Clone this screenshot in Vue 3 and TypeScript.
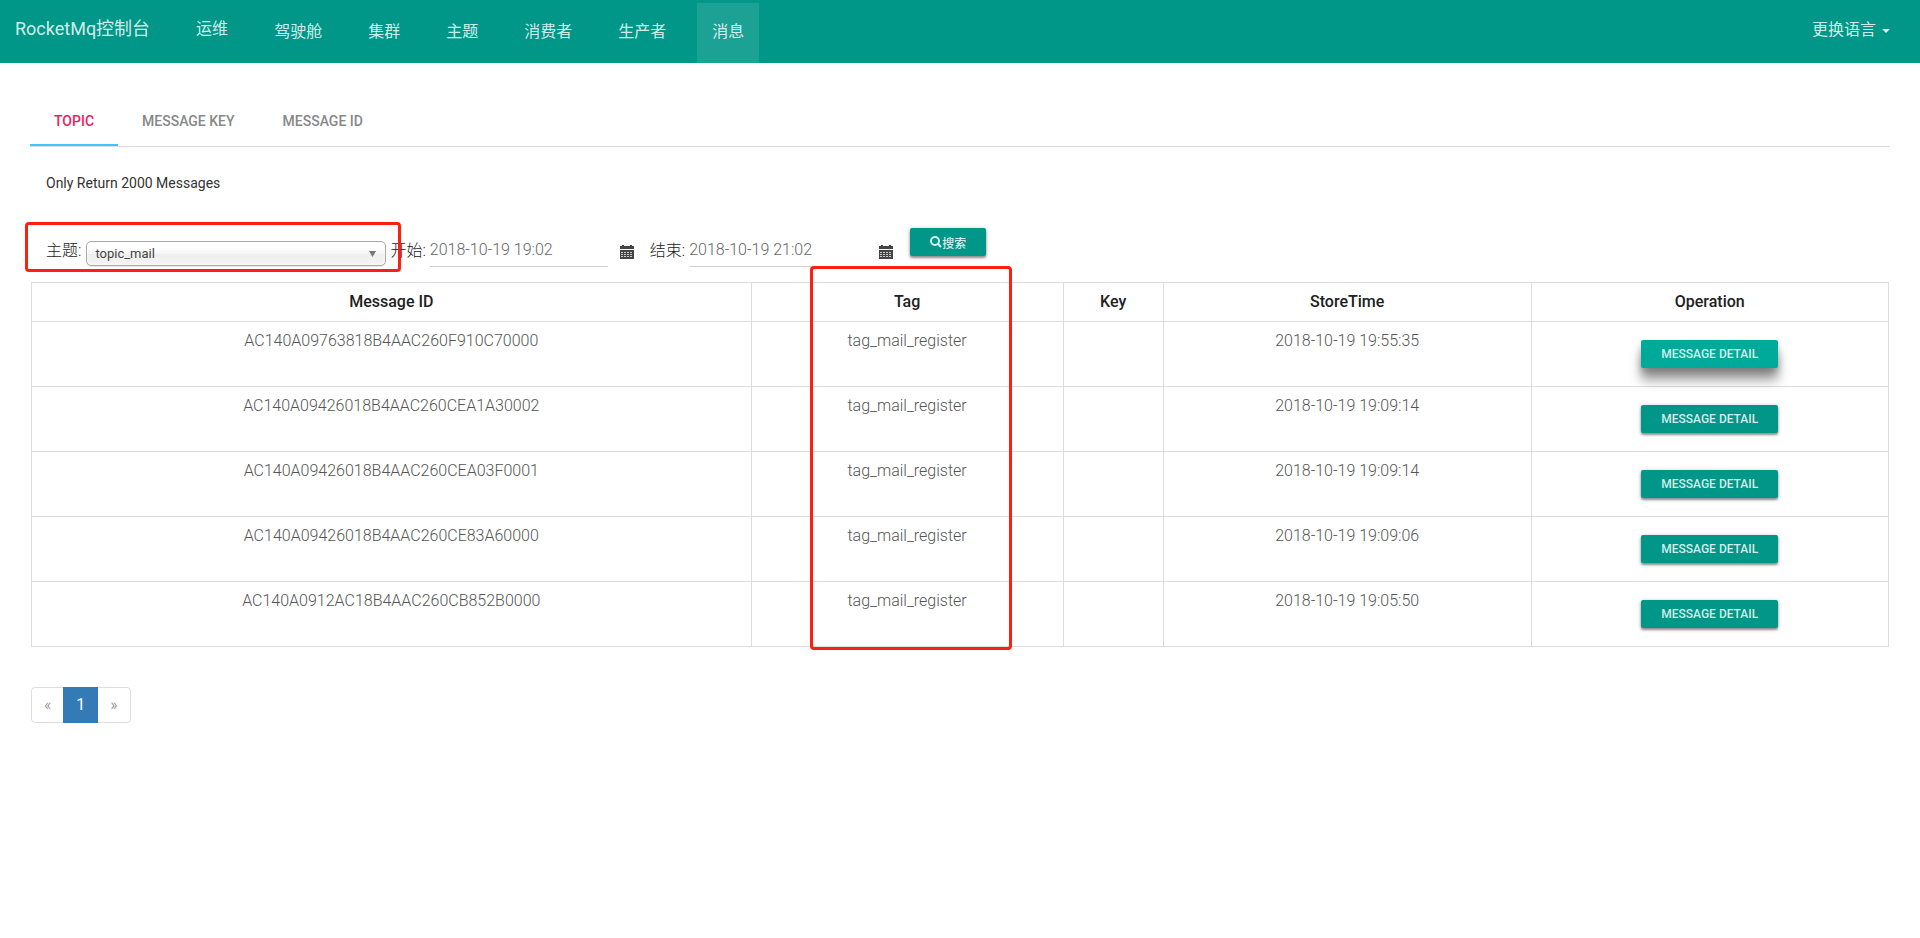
<script setup lang="ts">
import { ref } from 'vue'

interface Message {
  id: string
  tag: string
  key: string
  storeTime: string
}

const navItems: string[] = ['驾驶舱', '集群', '主题', '消费者', '生产者', '消息']
const activeNav = '消息'

const tabs: string[] = ['Topic', 'Message Key', 'Message ID']
const activeTab = ref('Topic')

const topic = ref('topic_mail')
const begin = ref('2018-10-19 19:02')
const end = ref('2018-10-19 21:02')

const messages: Message[] = [
  { id: 'AC140A09763818B4AAC260F910C70000', tag: 'tag_mail_register', key: '', storeTime: '2018-10-19 19:55:35' },
  { id: 'AC140A09426018B4AAC260CEA1A30002', tag: 'tag_mail_register', key: '', storeTime: '2018-10-19 19:09:14' },
  { id: 'AC140A09426018B4AAC260CEA03F0001', tag: 'tag_mail_register', key: '', storeTime: '2018-10-19 19:09:14' },
  { id: 'AC140A09426018B4AAC260CE83A60000', tag: 'tag_mail_register', key: '', storeTime: '2018-10-19 19:09:06' },
  { id: 'AC140A0912AC18B4AAC260CB852B0000', tag: 'tag_mail_register', key: '', storeTime: '2018-10-19 19:05:50' },
]
</script>

<template>
  <div class="page">
    <header class="navbar">
      <a class="brand" href="#">RocketMq控制台</a>
      <a class="ops" href="#ops">运维</a>
      <nav class="nav">
        <a
          v-for="item in navItems"
          :key="item"
          href="#"
          class="nav-link"
          :class="{ active: item === activeNav }"
        >{{ item }}</a>
      </nav>
      <button type="button" class="language">更换语言<span class="caret"></span></button>
    </header>

    <main class="content">
      <div class="tabs" role="tablist">
        <button
          v-for="tab in tabs"
          :key="tab"
          type="button"
          role="tab"
          class="tab"
          :class="{ selected: tab === activeTab }"
          :aria-selected="tab === activeTab"
          @click="activeTab = tab"
        >{{ tab }}</button>
      </div>

      <h5 class="hint">Only Return 2000 Messages</h5>

      <form class="filters" @submit.prevent>
        <div class="topic-field">
          <label class="topic-label" for="topic">主题:</label>
          <div class="select-wrap">
            <select id="topic" v-model="topic">
              <option>topic_mail</option>
            </select>
            <svg class="arrow" viewBox="0 0 7 6" aria-hidden="true"><path d="M0 0h7L3.500 6z" /></svg>
          </div>
          <div class="marker marker-topic"></div>
        </div>
        <div class="date-field">
          <label for="begin">开始:</label>
          <input id="begin" v-model="begin" type="text" />
          <button type="button" class="calendar" aria-label="开始">
            <svg viewBox="0 0 14 14" aria-hidden="true">
              <path d="M0 1h2V0h2v1h6V0h2v1h2v3H0zM0 5h14v9H0z" />
              <path class="grid" d="M1 7.500h12M1 9.500h12M1 11.500h12" />
            </svg>
          </button>
        </div>
        <div class="date-field">
          <label for="end">结束:</label>
          <input id="end" v-model="end" type="text" />
          <button type="button" class="calendar" aria-label="结束">
            <svg viewBox="0 0 14 14" aria-hidden="true">
              <path d="M0 1h2V0h2v1h6V0h2v1h2v3H0zM0 5h14v9H0z" />
              <path class="grid" d="M1 7.500h12M1 9.500h12M1 11.500h12" />
            </svg>
          </button>
        </div>
        <button type="submit" class="raised search">
          <svg viewBox="0 0 12 12" aria-hidden="true">
            <circle cx="5" cy="5" r="4" />
            <path d="M8 8l3 3" />
          </svg>搜索
        </button>
      </form>

      <div class="table-wrap">
        <table>
          <colgroup>
            <col class="col-id" />
            <col class="col-tag" />
            <col class="col-key" />
            <col class="col-time" />
            <col class="col-op" />
          </colgroup>
          <thead>
            <tr>
              <th>Message ID</th>
              <th>Tag</th>
              <th>Key</th>
              <th>StoreTime</th>
              <th>Operation</th>
            </tr>
          </thead>
          <tbody>
            <tr v-for="(message, index) in messages" :key="message.id">
              <td>{{ message.id }}</td>
              <td>{{ message.tag }}</td>
              <td>{{ message.key }}</td>
              <td>{{ message.storeTime }}</td>
              <td>
                <button type="button" class="raised detail" :class="{ lifted: index === 0 }">Message Detail</button>
              </td>
            </tr>
          </tbody>
        </table>
        <div class="marker marker-tag"></div>
      </div>

      <nav class="pagination" aria-label="pagination">
        <a href="#" class="page-link">«</a>
        <a href="#" class="page-link current">1</a>
        <a href="#" class="page-link">»</a>
      </nav>
    </main>
  </div>
</template>

<style>
body {
  margin: 0;
  background: #fff;
}
</style>

<style scoped>
.page,
.page button,
.page input,
.page select {
  font-family: Roboto, 'Noto Sans CJK SC', sans-serif;
}

.page {
  font-size: 16px;
  font-weight: 300;
  line-height: 22px;
  color: #212121;
}

*,
*::before,
*::after {
  box-sizing: border-box;
}

button {
  border: 0;
  background: none;
  cursor: pointer;
}

a {
  text-decoration: none;
}

.navbar {
  display: flex;
  height: 63px;
  background: #009688;
}

.brand,
.ops,
.nav-link,
.language {
  color: rgba(255, 255, 255, 0.84);
  font-weight: 400;
}

.brand {
  padding: 18px 15px;
  font-size: 18px;
}

.ops {
  padding: 18px 15px;
}

.nav {
  display: flex;
  gap: 16px;
  margin: 3px 0 0 16px;
}

.brand + .ops {
  margin-left: 16px;
}

.nav-link {
  padding: 18px 15px;
}

.nav-link.active {
  background: rgba(255, 255, 255, 0.11);
}

.language {
  display: flex;
  align-items: center;
  gap: 6px;
  height: 56px;
  margin-left: auto;
  padding: 0 30px;
  font-size: 16px;
}

.caret {
  margin-top: 5px;
  border: 4px solid transparent;
  border-top-color: currentColor;
  border-bottom: 0;
}

.content {
  padding: 35px 30px 0;
}

.tabs {
  display: flex;
  border-bottom: 1px solid #ddd;
}

.tab {
  height: 48px;
  padding: 0 24px;
  border-bottom: 2px solid transparent;
  font-size: 14px;
  font-weight: 500;
  color: #888;
  text-transform: uppercase;
}

.tab.selected {
  border-bottom-color: #40c4ff;
  color: #e91e63;
}

.hint {
  margin: 25px 16px 34px;
  font-size: 14px;
  font-weight: 400;
  color: #333;
}

.filters {
  display: flex;
  align-items: flex-end;
  gap: 4px;
  padding-left: 16px;
}

.topic-field {
  position: relative;
  display: flex;
  align-items: center;
  gap: 5px;
}

.topic-label {
  padding-bottom: 5px;
}

.select-wrap {
  position: relative;
}

select {
  display: block;
  width: 300px;
  height: 25px;
  padding: 0 8px;
  border: 1px solid #aaa;
  border-radius: 5px;
  appearance: none;
  background: linear-gradient(#fff 20%, #f6f6f6 50%, #eee 52%, #f4f4f4 100%);
  box-shadow: inset 0 0 3px #fff, 0 1px 1px rgba(0, 0, 0, 0.1);
  font-size: 13px;
  color: #444;
}

.arrow {
  position: absolute;
  top: 10px;
  right: 10px;
  width: 7px;
  height: 6px;
  fill: #777;
  pointer-events: none;
}

.marker {
  position: absolute;
  border: 3px solid #ff1f10;
  border-radius: 4px;
  pointer-events: none;
}

.marker-topic {
  inset: -18px -15px -5px -21px;
}

.date-field {
  display: flex;
  align-items: center;
  gap: 4px;
}

.date-field label {
  padding-top: 6px;
}

.date-field input {
  width: 178px;
  height: 39px;
  padding: 4px 0 0;
  border: 0;
  border-bottom: 1px solid #d2d2d2;
  border-radius: 0;
  background: none;
  font-size: 16px;
  font-weight: 300;
  color: #666;
}

.calendar {
  display: flex;
  width: 38px;
  margin-left: -4px;
  padding: 9px 12px 0;
}

.calendar svg {
  width: 14px;
  height: 14px;
  fill: #444;
}

.calendar .grid {
  fill: none;
  stroke: #ccc;
  stroke-width: 1;
  stroke-dasharray: 2 1;
}

.raised {
  height: 28px;
  padding: 0 20px;
  border-radius: 2px;
  background: #009688;
  box-shadow: 0 1px 4px rgba(0, 0, 0, 0.3), 0 2px 2px rgba(0, 0, 0, 0.3);
  font-size: 12px;
  font-weight: 500;
  color: rgba(255, 255, 255, 0.84);
  text-transform: uppercase;
}

.search {
  display: flex;
  align-items: center;
  align-self: flex-start;
  margin-left: 1px;
}

.search svg {
  width: 12px;
  height: 12px;
  fill: none;
  stroke: currentColor;
  stroke-width: 2;
}

.detail {
  margin: 10px 0;
}

.lifted {
  background: #00aa9a;
  box-shadow: 0 12px 12px rgba(0, 0, 0, 0.4), 0 4px 6px rgba(0, 0, 0, 0.2);
}

.table-wrap {
  position: relative;
  margin: 15px 1px 0;
}

table {
  width: 100%;
  border-collapse: collapse;
  table-layout: fixed;
  text-align: center;
}

.col-id { width: 38.75%; }
.col-tag { width: 16.8%; }
.col-key { width: 5.4%; }
.col-time { width: 19.8%; }
.col-op { width: 19.25%; }

th,
td {
  border: 1px solid #ddd;
}

th {
  padding: 8px;
  font-weight: 500;
}

td {
  padding: 8px;
  color: #555;
  vertical-align: top;
}

td .raised {
  display: inline-block;
  vertical-align: top;
}

.marker-tag {
  top: -16px;
  bottom: -3px;
  left: 41.9%;
  width: 202px;
}

.pagination {
  display: inline-flex;
  margin: 40px 1px 0;
  border: 1px solid #ddd;
  border-radius: 4px;
}

.page-link {
  padding: 6px 12px;
  color: #777;
}

.page-link.current {
  margin: -1px 0;
  padding: 7px 13px;
  background: #337ab7;
  font-weight: 400;
  color: #fff;
}
</style>
